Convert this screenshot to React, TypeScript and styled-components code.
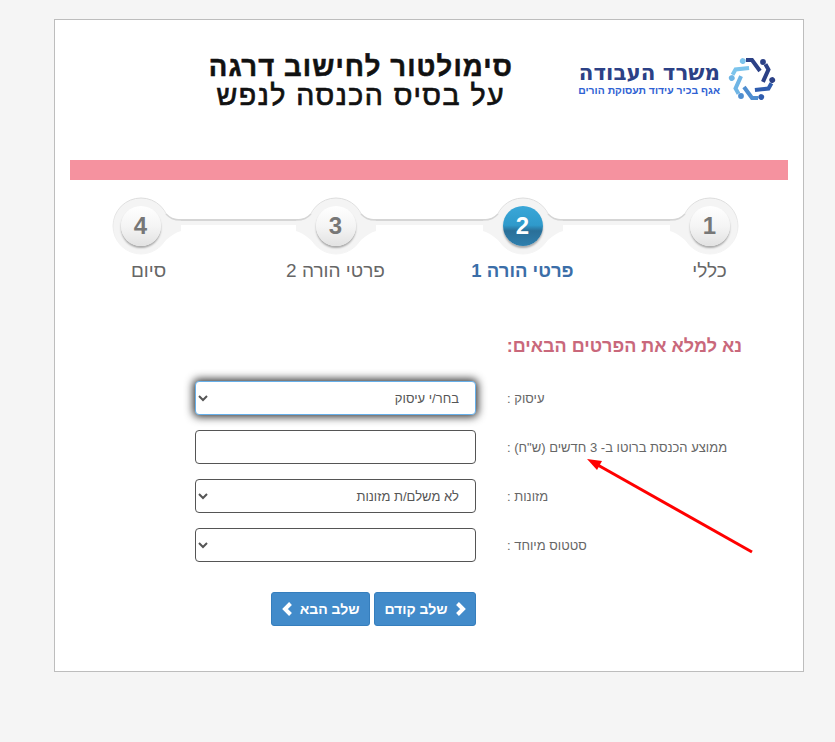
import { createGlobalStyle, styled } from "styled-components";

const GlobalStyle = createGlobalStyle`
  html, body {
    margin: 0;
    background: #f5f5f5;
    font-family: "Liberation Sans", Arial, sans-serif;
  }
`;

const Page = styled.div`
  width: 835px;
  height: 742px;
  padding: 19px 0 0 54px;
  box-sizing: border-box;
`;

const Card = styled.main`
  position: relative;
  direction: rtl;
  width: 750px;
  height: 653px;
  box-sizing: border-box;
  padding: 0 15px;
  background: #fff;
  border: 1px solid #bdbdbd;
`;

const Header = styled.header`
  display: flex;
  align-items: flex-start;
  height: 140px;
  padding: 31px 11px 0 0;
  box-sizing: border-box;
`;

const Logo = styled.div`
  display: flex;
  align-items: center;
  gap: 7px;
  width: 198px;
  margin-top: 3px;
  flex-shrink: 0;
`;

const LogoText = styled.div`
  display: flex;
  flex-direction: column;
  white-space: nowrap;
`;

const LogoName = styled.span`
  font-family: "DejaVu Sans", sans-serif;
  font-size: 21.4px;
  line-height: 24px;
  font-weight: 700;
  color: #2c4186;
`;

const LogoTagline = styled.span`
  font-size: 10.4px;
  line-height: 12px;
  font-weight: 700;
  color: #2f62d3;
`;

const Title = styled.h1`
  margin: 1px 66px 0 0;
  font-size: 27.5px;
  line-height: 29px;
  font-weight: 700;
  letter-spacing: 1.1px;
  color: #111;
  text-align: center;
  white-space: nowrap;
  -webkit-text-stroke: 0.5px #111;
`;

const TitleLight = styled.span`
  display: block;
  font-size: 28.5px;
  font-weight: 400;
  letter-spacing: 1.5px;
  -webkit-text-stroke: 0.7px #111;
`;

const PinkBar = styled.div`
  height: 20px;
  background: #f5929f;
`;

const Stepper = styled.ol`
  display: grid;
  grid-template-columns: repeat(4, 187px);
  margin: 17px -15px 0 0;
  padding: 0;
  list-style: none;
`;

const Step = styled.li`
  position: relative;
  display: flex;
  flex-direction: column;
  align-items: center;
`;

const Halo = styled.div<{ $shift?: number }>`
  position: relative;
  width: 80px;
  height: 58px;
  margin-right: ${(p) => p.$shift ?? 0}px;
  display: flex;
  align-items: center;
  justify-content: center;
`;

const HaloShape = styled.svg`
  position: absolute;
  top: 0;
  left: 0;
`;

const Connector = styled.span<{ $wide?: boolean }>`
  position: absolute;
  top: 22px;
  right: 50%;
  width: ${(p) => (p.$wide ? 195 : 187)}px;
  height: 4px;
  background: #f4f4f4;
  border-top: 2px solid #d5d5d5;
`;

const Dot = styled.span<{ $active?: boolean }>`
  position: relative;
  width: 40px;
  height: 40px;
  border-radius: 50%;
  display: flex;
  align-items: center;
  justify-content: center;
  font-size: 24px;
  font-weight: 700;
  color: ${(p) => (p.$active ? "#fff" : "#777")};
  background: ${(p) =>
    p.$active
      ? "linear-gradient(#3aa7d8 0%, #2f9acb 48%, #2a6f98 62%, #2f7fad 100%)"
      : "linear-gradient(#fff 0%, #f5f5f5 50%, #e2e2e2 100%)"};
  box-shadow: 0 2px 2px rgba(0, 0, 0, 0.3);
`;

const StepLabel = styled.span<{ $active?: boolean }>`
  margin-top: 6px;
  font-size: ${(p) => (p.$active ? 18.5 : 19)}px;
  line-height: 20px;
  font-weight: ${(p) => (p.$active ? 700 : 400)};
  color: ${(p) => (p.$active ? "#3b6ea8" : "#666")};
`;

const Form = styled.form`
  margin-top: 55px;
  padding-right: 46px;
`;

const Heading = styled.h2`
  margin: 0 0 24px;
  font-size: 18px;
  line-height: 21px;
  font-weight: 700;
  color: #c9687b;
`;

const Row = styled.div`
  display: flex;
  align-items: center;
  height: 34px;
  margin-bottom: 15px;
`;

const Label = styled.label`
  width: 235px;
  margin-left: 31px;
  font-size: 13px;
  color: #666;
  text-align: left;
  white-space: nowrap;
`;

const Select = styled.select<{ $focused?: boolean }>`
  width: 281px;
  height: 34px;
  box-sizing: border-box;
  padding: 0 12px;
  font-family: inherit;
  font-size: 13px;
  color: #555;
  background: #fff;
  border-radius: 4px;
  border: 1px solid ${(p) => (p.$focused ? "#66afe9" : "#555")};
  box-shadow: ${(p) => (p.$focused ? "0 0 8px 2px #333" : "none")};
  outline: none;
`;

const Input = styled.input`
  width: 281px;
  height: 34px;
  box-sizing: border-box;
  padding: 0 12px;
  background: #fff;
  border: 1px solid #555;
  border-radius: 4px;
  outline: none;
`;

const Buttons = styled.div`
  display: flex;
  gap: 4px;
  margin: 30px 266px 0 0;
`;

const NavButton = styled.button`
  display: flex;
  align-items: center;
  justify-content: center;
  gap: 6px;
  height: 34px;
  padding: 0 9.5px;
  font-family: inherit;
  font-size: 14px;
  font-weight: 700;
  color: #fff;
  background: #428bca;
  border: 1px solid #357ebd;
  border-radius: 3px;
`;

const ArrowOverlay = styled.svg`
  position: absolute;
  top: 0;
  left: 0;
  pointer-events: none;
`;

const Chevron = ({ flip }: { flip?: boolean }) => (
  <svg width="12" height="14" viewBox="0 0 12 14" style={flip ? { transform: "scaleX(-1)" } : undefined}>
    <path d="M8.5 1.500 3 7l5.500 5.500" fill="none" stroke="#fff" strokeWidth="4" />
  </svg>
);

const markBars = [
  { angle: 0, color: "#2c4186" },
  { angle: 60, color: "#2c4186" },
  { angle: 120, color: "#2f5cae" },
  { angle: 180, color: "#4f8ed0" },
  { angle: 240, color: "#6fb5e5" },
  { angle: 300, color: "#7cc4ec" },
];

const MinistryMark = () => (
  <svg width="50" height="50" viewBox="-25 -25 50 50" style={{ flexShrink: 0 }}>
    {markBars.map((b) => (
      <g key={b.angle} transform={`rotate(${b.angle})`} fill={b.color}>
        <path d="M-6 -19 L0 -19 L8 -8" fill="none" stroke={b.color} strokeWidth="4" />
        <circle cx="11" cy="-17" r="2.9" />
      </g>
    ))}
  </svg>
);

const HaloArt = ({ left, right }: { left?: boolean; right?: boolean }) => (
  <HaloShape width="80" height="58" viewBox="0 0 80 58">
    <defs>
      <linearGradient id="haloEdge" x1="0" y1="0" x2="0" y2="1">
        <stop offset="0" stopColor="#dcdcdc" />
        <stop offset="0.8" stopColor="#f4f4f4" />
      </linearGradient>
    </defs>
    <circle cx="40" cy="29" r="28" fill="#f4f4f4" stroke="url(#haloEdge)" />
    {left && (
      <>
        <path d="M0 23 C8 23 11 21 15 17 L24 52 C16 44 10 37 0 34 Z" fill="#f4f4f4" />
        <path d="M0 23 C8 23 11 21 15 17" fill="none" stroke="#d5d5d5" strokeWidth="1.500" />
      </>
    )}
    {right && (
      <>
        <path d="M80 23 C72 23 69 21 65 17 L56 52 C64 44 70 37 80 34 Z" fill="#f4f4f4" />
        <path d="M80 23 C72 23 69 21 65 17" fill="none" stroke="#d5d5d5" strokeWidth="1.500" />
      </>
    )}
  </HaloShape>
);

const steps = [
  { num: 1, label: "כללי" },
  { num: 2, label: "פרטי הורה 1", active: true },
  { num: 3, label: "פרטי הורה 2" },
  { num: 4, label: "סיום" },
];

export default function App() {
  return (
    <Page>
      <GlobalStyle />
      <Card>
        <Header>
          <Logo>
            <MinistryMark />
            <LogoText>
              <LogoName>משרד העבודה</LogoName>
              <LogoTagline>אגף בכיר עידוד תעסוקת הורים</LogoTagline>
            </LogoText>
          </Logo>
          <Title>
            סימולטור לחישוב דרגה
            <TitleLight>על בסיס הכנסה לנפש</TitleLight>
          </Title>
        </Header>
        <PinkBar />
        <Stepper>
          {steps.map((s) => (
            <Step key={s.num}>
              {s.num < 4 && <Connector $wide={s.num === 3} />}
              <Halo $shift={s.num === 4 ? 16 : 0}>
                <HaloArt left={s.num < 4} right={s.num > 1} />
                <Dot $active={s.active}>{s.num}</Dot>
              </Halo>
              <StepLabel $active={s.active}>{s.label}</StepLabel>
            </Step>
          ))}
        </Stepper>
        <Form>
          <Heading>נא למלא את הפרטים הבאים:</Heading>
          <Row>
            <Label>עיסוק :</Label>
            <Select $focused defaultValue="a">
              <option value="a">בחר/י עיסוק</option>
            </Select>
          </Row>
          <Row>
            <Label>ממוצע הכנסת ברוטו ב- 3 חדשים (ש"ח) :</Label>
            <Input />
          </Row>
          <Row>
            <Label>מזונות :</Label>
            <Select defaultValue="a">
              <option value="a">לא משלם/ת מזונות</option>
            </Select>
          </Row>
          <Row>
            <Label>סטטוס מיוחד :</Label>
            <Select />
          </Row>
          <Buttons>
            <NavButton type="button">
              <Chevron flip />
              שלב קודם
            </NavButton>
            <NavButton type="button">
              שלב הבא
              <Chevron />
            </NavButton>
          </Buttons>
        </Form>
        <ArrowOverlay width="750" height="653" viewBox="0 0 750 653">
          <path d="M697 532 L541 444" stroke="#f00" strokeWidth="3" fill="none" />
          <path d="M532 439 L547 441 L542 450 Z" fill="#f00" />
        </ArrowOverlay>
      </Card>
    </Page>
  );
}
